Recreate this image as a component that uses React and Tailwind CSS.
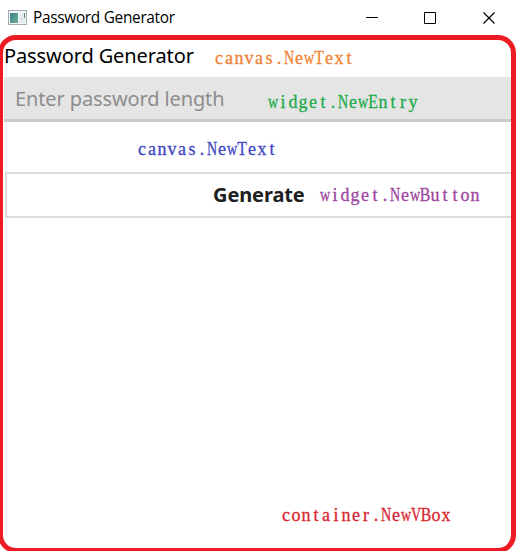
const WIDE = "NVwm";
const CAPS = "BTE";

function glyphScale(char) {
  if (WIDE.includes(char)) return "scale-x-[0.78]";
  if (CAPS.includes(char)) return "scale-x-[0.88]";
  return "";
}

// Annotation label: serif letters set on a fixed 10px pitch.
function Note({ className, children }) {
  return (
    <span
      className={`flex h-5 font-['Liberation_Serif',serif] text-[18px] leading-5 [-webkit-text-stroke:0.3px_currentColor] ${className}`}
    >
      {children.split("").map((char, i) => (
        <span key={i} className={`flex w-[10px] shrink-0 justify-center ${glyphScale(char)}`}>
          {char}
        </span>
      ))}
    </span>
  );
}

function AppIcon() {
  return (
    <svg className="ml-2 mt-[10px] h-4 w-[19px] shrink-0" viewBox="0 0 19 16" shapeRendering="crispEdges">
      <defs>
        <linearGradient id="pane" x1="0" y1="0" x2="1" y2="1">
          <stop offset="0" stopColor="#3f7f8e" />
          <stop offset="1" stopColor="#6bae91" />
        </linearGradient>
      </defs>
      <rect x="0.5" y="0.5" width="18" height="14" fill="#f3f5f6" stroke="#a3acb1" />
      <rect x="2" y="3" width="8" height="10" fill="url(#pane)" />
      <rect x="11" y="3" width="6" height="10" fill="#e3eaed" />
      <rect x="16" y="3" width="1" height="5" fill="#64828a" />
    </svg>
  );
}

function TitleBar() {
  return (
    <header className="flex h-[35px] w-full items-start bg-white">
      <AppIcon />
      <span className="ml-[6px] mt-[8px] w-[150px] font-['Open_Sans','Noto_Sans',sans-serif] text-[15.4px] leading-5 tracking-[-0.3px] whitespace-nowrap text-black">
        Password Generator
      </span>
      <svg
        className="ml-auto mr-[22px] mt-[11px] h-[14px] w-[131px]"
        viewBox="0 0 131 14"
        fill="none"
        stroke="#000"
      >
        <path d="M1 6.5H13" />
        <path d="M59.5 1.5H70.5V12.5H59.5Z" />
        <path d="M118.5 1.5L129.5 12.5M129.5 1.5L118.5 12.5" strokeWidth="1.2" />
      </svg>
    </header>
  );
}

export default function App() {
  return (
    <div className="relative flex h-[551px] w-[518px] flex-col overflow-hidden bg-white font-['Noto_Sans',sans-serif]">
      <TitleBar />
      <main className="flex w-[513px] flex-1 flex-col pt-[5px] pl-1">
        <div className="flex h-[37px] items-start">
          <h1 className="mt-[2px] w-[190px] text-[20px] leading-7 font-normal tracking-[-0.11px] whitespace-nowrap text-black">
            Password Generator
          </h1>
          <Note className="mt-[8px] ml-5 text-[#f08236]">canvas.NewText</Note>
        </div>
        <div className="flex h-[45px] shrink-0 items-start border-b-[3px] border-[#cbcbcb] bg-[#e5e5e5]">
          <span className="mt-2 ml-[11px] w-[210px] text-[20px] leading-7 tracking-[-0.12px] whitespace-nowrap text-[#8d8d8d]">
            Enter password length
          </span>
          <Note className="mt-[15px] ml-[43px] text-[#22ac4c]">widget.NewEntry</Note>
        </div>
        <div className="h-[50px] shrink-0 pt-[17px] pl-[133px]">
          <Note className="text-[#4048c0]">canvas.NewText</Note>
        </div>
        <button className="ml-[1px] flex h-[46px] shrink-0 items-start border-t-2 border-b-2 border-l-2 border-[#dcdcdc] bg-white text-left">
          <span className="mt-[7px] ml-[206px] w-[92px] text-[20px] leading-7 font-bold tracking-[-0.1px] whitespace-nowrap text-[#202020]">
            Generate
          </span>
          <Note className="mt-[11px] ml-[15px] text-[#9d469f]">widget.NewButton</Note>
        </button>
        <div className="mt-auto pb-[26px] pl-[277px]">
          <Note className="text-[#d92630]">container.NewVBox</Note>
        </div>
      </main>
      <div className="pointer-events-none absolute top-[35px] -left-[2px] h-[518px] w-[518px] rounded-[18px] border-[5px] border-[#ed1c24]" />
    </div>
  );
}
